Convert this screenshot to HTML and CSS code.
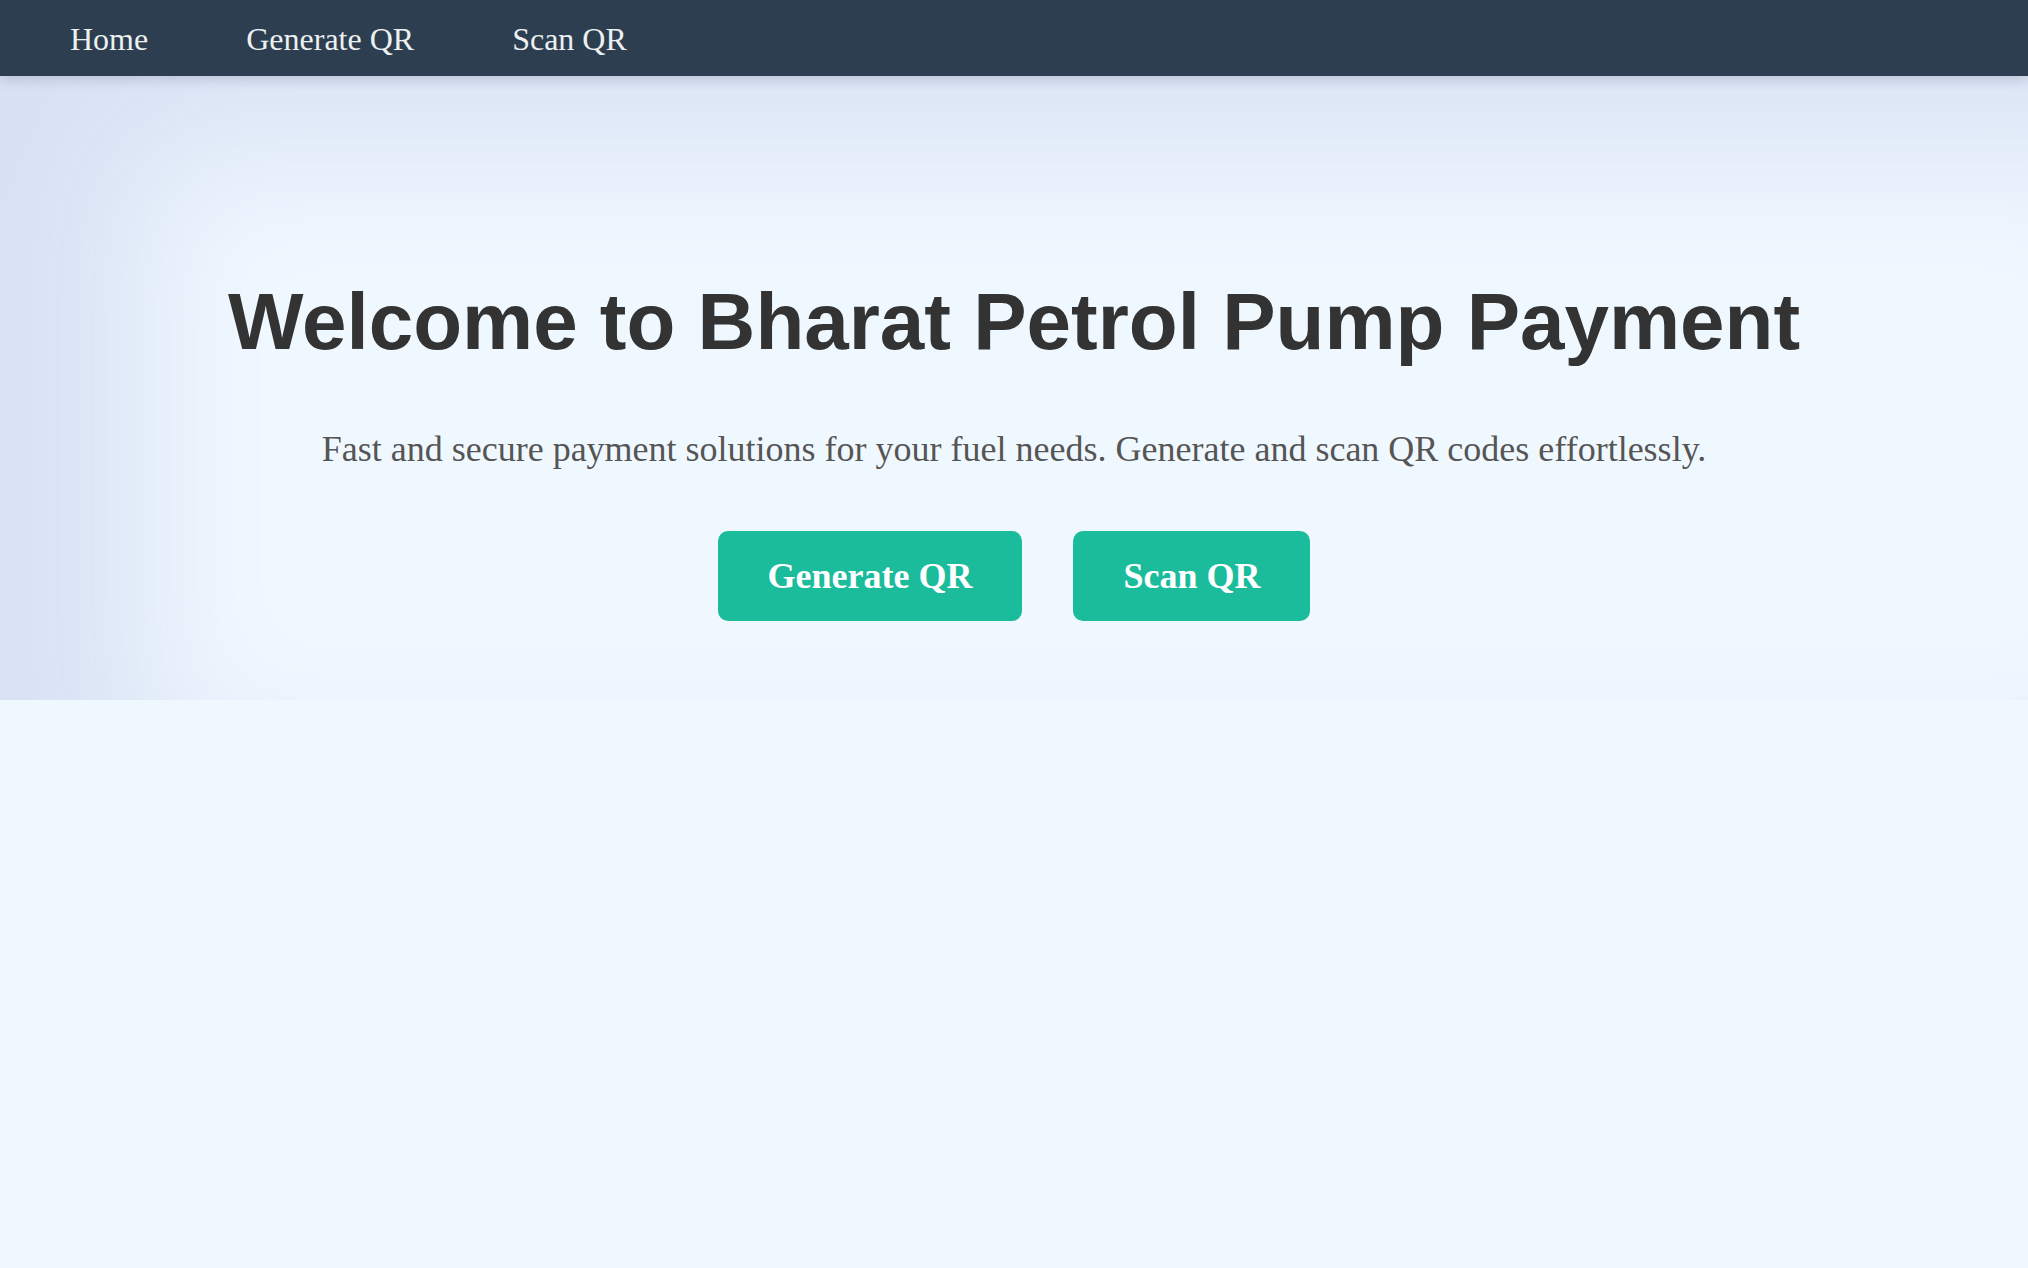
FILE: index.html
```html
<!DOCTYPE html>
<html lang="en">
<head>
<meta charset="utf-8">
<title>Bharat Petrol Pump Payment</title>
<link rel="stylesheet" href="styles.css">
</head>
<body>
<nav class="navbar">
  <a class="nav-link" href="#">Home</a>
  <a class="nav-link" href="#">Generate QR</a>
  <a class="nav-link" href="#">Scan QR</a>
</nav>
<section class="hero">
  <h1 class="hero-title">Welcome to Bharat Petrol Pump Payment</h1>
  <p class="hero-text">Fast and secure payment solutions for your fuel needs. Generate and scan QR codes effortlessly.</p>
  <div class="hero-actions">
    <a class="btn" href="#">Generate QR</a>
    <a class="btn" href="#">Scan QR</a>
  </div>
</section>
</body>
</html>
```

FILE: styles.css
```css
html, body {
  margin: 0;
  padding: 0;
}

body {
  background: #f0f8ff;
  font-family: "Liberation Serif", "Times New Roman", serif;
  min-height: 100vh;
}

.navbar {
  position: relative;
  z-index: 2;
  display: flex;
  align-items: center;
  height: 76px;
  padding: 2px 20px 0;
  box-sizing: border-box;
  background: #2c3e50;
  box-shadow: 0 3px 12px rgba(20, 30, 60, 0.18);
}

.nav-link {
  color: #ecf0f1;
  text-decoration: none;
  font-size: 32px;
  padding: 0 48px 0 50px;
}

.hero {
  position: relative;
  z-index: 1;
  height: 624px;
  box-sizing: border-box;
  padding: 200px 20px 0;
  text-align: center;
  background: #f0f8ff;
  box-shadow: inset 140px 70px 150px 0 #d8e2f4;
}

.hero-title {
  margin: 0 0 60px;
  font-family: "Liberation Sans", Arial, sans-serif;
  font-weight: bold;
  font-size: 80px;
  color: #333333;
}

.hero-text {
  margin: 0 0 61px;
  font-size: 36px;
  color: #555555;
}

.hero-actions {
  display: flex;
  justify-content: center;
  gap: 51px;
}

.btn {
  display: inline-block;
  padding: 24px 50px;
  background: #1abc9c;
  color: #ffffff;
  font-weight: bold;
  font-size: 36px;
  text-decoration: none;
  border-radius: 10px;
}
```
